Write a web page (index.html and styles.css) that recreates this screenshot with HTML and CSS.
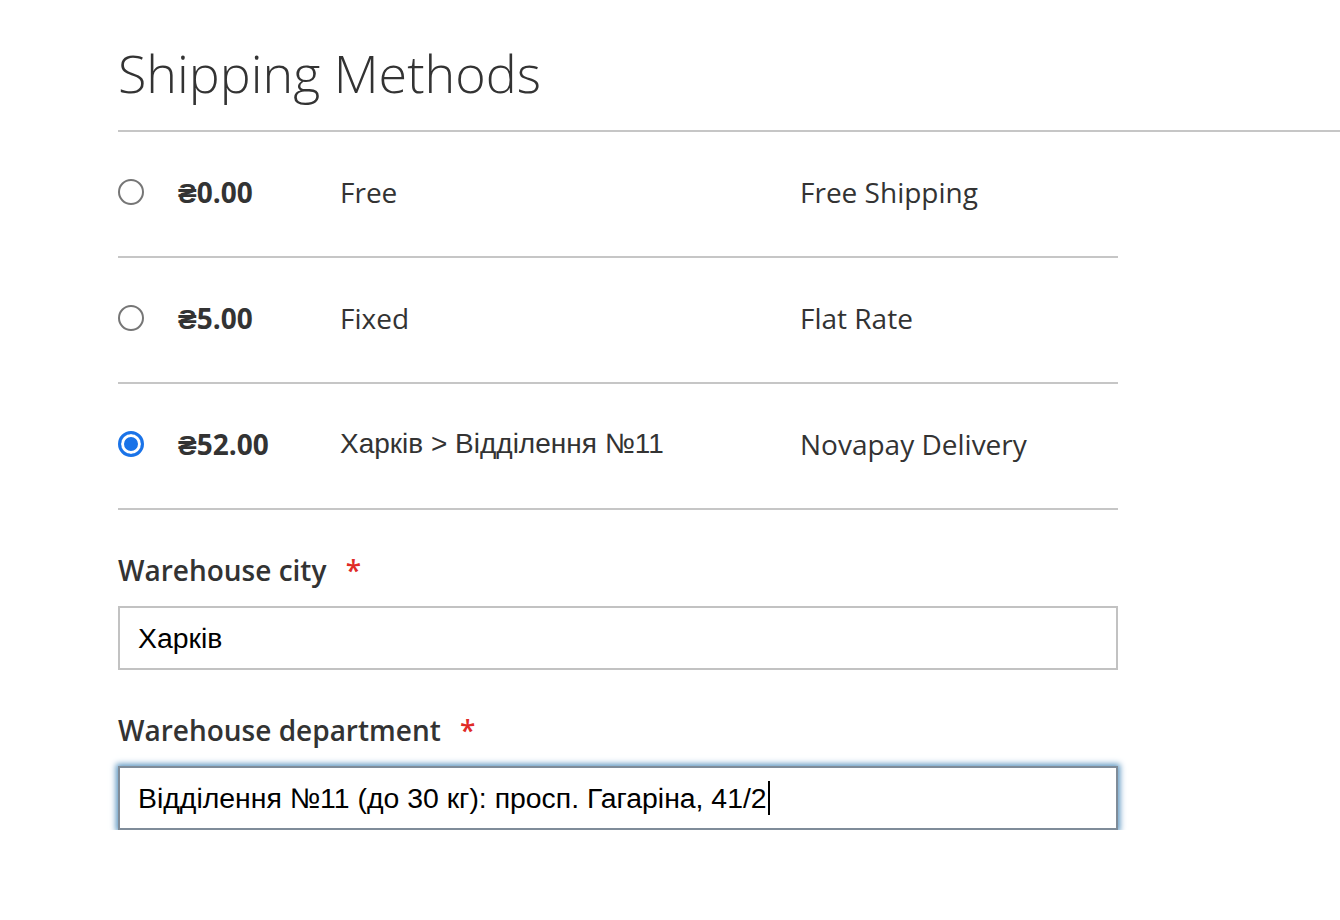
FILE: index.html
```html
<!DOCTYPE html>
<html lang="en">
<head>
<meta charset="utf-8">
<title>Shipping Methods</title>
<link rel="stylesheet" href="styles.css">
</head>
<body>
<div class="page">
  <div class="title-block">
    <h1 class="title">Shipping Methods</h1>
  </div>
  <div class="content">
    <div class="methods">
      <div class="row">
        <span class="radio"></span>
        <span class="price">₴0.00</span>
        <span class="method">Free</span>
        <span class="carrier">Free Shipping</span>
      </div>
      <div class="row">
        <span class="radio"></span>
        <span class="price">₴5.00</span>
        <span class="method">Fixed</span>
        <span class="carrier">Flat Rate</span>
      </div>
      <div class="row">
        <span class="radio checked"></span>
        <span class="price">₴52.00</span>
        <span class="method cyr">Харків &gt; Відділення №11</span>
        <span class="carrier">Novapay Delivery</span>
      </div>
    </div>
    <div class="field">
      <div class="label">Warehouse city <span class="req">*</span></div>
      <div class="input">Харків</div>
    </div>
    <div class="field">
      <div class="label">Warehouse department <span class="req">*</span></div>
      <div class="input focused">Відділення №11 (до 30 кг): просп. Гагаріна, 41/2<span class="caret"></span></div>
    </div>
  </div>
</div>
</body>
</html>
```
FILE: styles.css
```css
* { box-sizing: border-box; }
html, body { margin: 0; padding: 0; background: #fff; }
body { font-family: "Open Sans", "Liberation Sans", sans-serif; color: #333; }
.page { padding-left: 118px; }
.title-block {
  padding-top: 42px;
  height: 132px;
  border-bottom: 2px solid #c6c6c6;
}
.title {
  margin: 0;
  font-size: 52px;
  font-weight: 300;
  line-height: 62px;
  color: #333;
}
.content { width: 1000px; }
.row {
  display: grid;
  grid-template-columns: 60px 162px 460px 1fr;
  align-items: center;
  height: 126px;
  padding-bottom: 5px;
  border-bottom: 2px solid #c6c6c6;
  font-size: 28px;
  line-height: 40px;
}
.radio {
  width: 26px;
  height: 26px;
  border-radius: 50%;
  border: 2px solid #767676;
  background: #fff;
  margin-top: 1px;
}
.radio.checked {
  border: 3px solid #1a73e8;
  box-shadow: inset 0 0 0 3px #fff, inset 0 0 0 20px #1a73e8;
}
.price { font-weight: 700; }
.cyr { font-family: "Liberation Sans", Arial, sans-serif; }
.field { margin-top: 40px; }
.field + .field { margin-top: 40px; }
.label {
  font-size: 28px;
  font-weight: 600;
  line-height: 40px;
  margin-bottom: 16px;
}
.req { color: #e02b27; margin-left: 12px; font-weight: 600; }
.input {
  height: 64px;
  border: 2px solid #c2c2c2;
  padding: 0 18px;
  display: flex;
  align-items: center;
  font-family: "Liberation Sans", Arial, sans-serif;
  font-size: 28.4px;
  color: #000;
}
.input.focused {
  border-color: #7f8c99;
  box-shadow: 0 0 6px 2px #5a94c0;
}
.caret {
  display: inline-block;
  width: 2px;
  height: 34px;
  background: #000;
  margin-left: 1px;
}
```
